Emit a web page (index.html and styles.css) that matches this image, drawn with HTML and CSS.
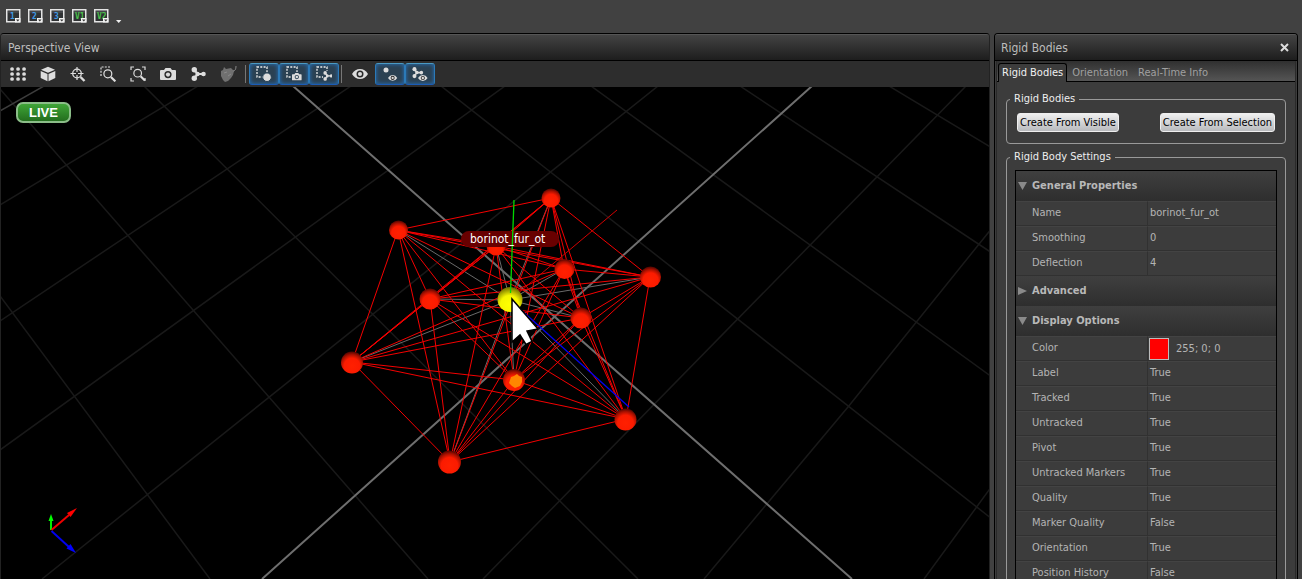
FILE: index.html
```html
<!DOCTYPE html>
<html lang="en">
<head>
<meta charset="utf-8">
<title>Perspective View</title>
<link rel="stylesheet" href="styles.css">
</head>
<body>
<div class="app">
  <header class="layouts">
    <button class="layout" aria-label="Layout 1"><svg width="15" height="14" viewBox="0 0 15 14"><use href="#frame"/><text x="4" y="10" class="digit">1</text><use href="#corner"/></svg></button>
    <button class="layout" aria-label="Layout 2"><svg width="15" height="14" viewBox="0 0 15 14"><use href="#frame"/><text x="4" y="10" class="digit">2</text><use href="#corner"/></svg></button>
    <button class="layout" aria-label="Layout 3"><svg width="15" height="14" viewBox="0 0 15 14"><use href="#frame"/><text x="4" y="10" class="digit">3</text><use href="#corner"/></svg></button>
    <button class="layout" aria-label="View 1"><svg width="15" height="14" viewBox="0 0 15 14"><use href="#frame"/><text x="3" y="10" class="digit view-digit">V1</text><use href="#corner"/></svg></button>
    <button class="layout" aria-label="View 2"><svg width="15" height="14" viewBox="0 0 15 14"><use href="#frame"/><text x="3" y="10" class="digit view-digit">V2</text><use href="#corner"/></svg></button>
    <button class="layout more" aria-label="More layouts"><svg width="6" height="14" viewBox="0 0 6 14"><path d="M0 11h5.400L2.700 14z" fill="#eee"/></svg></button>
  </header>

  <svg class="defs" width="0" height="0" aria-hidden="true">
    <defs>
      <g id="frame"><rect x=".75" y=".75" width="13" height="12" fill="#303234" stroke="#e4e4e4" stroke-width="1.500"/><path d="M2 3h11" stroke="#56595c"/></g>
      <g id="corner"><path d="M9 9h5.500v4.500H9z" fill="#f2f2f2"/><path d="M10 10.500h3.500l-1.700 2z" fill="#333"/></g>
      <g id="cam"><path fill-rule="evenodd" d="M1 3h3l1.500-2h5L12 3h3q1 0 1 1v8q0 1-1 1H1q-1 0-1-1V4q0-1 1-1zM8 4a3.600 3.600 0 1 0 0 7.200A3.600 3.600 0 1 0 8 4z"/><circle cx="8" cy="7.600" r="2.100"/></g>
      <g id="nodes"><path d="M3 3l4 4-4 4M7 7h6" fill="none" stroke="#ddd" stroke-width="2"/><circle cx="3.300" cy="2.700" r="2.700"/><circle cx="3.300" cy="11.300" r="2.700"/><circle cx="6.500" cy="7" r="2.200"/><circle cx="12.500" cy="7" r="2.300"/></g>
      <g id="eye"><path d="M0 5Q3 0 8 0t8 5q-3 5-8 5T0 5z"/><circle cx="8" cy="5" r="3.500" fill="#292929"/><circle cx="8" cy="5" r="2"/></g>
      <path id="marquee" d="M1 1h10v10H1z" fill="none" stroke="#eee" stroke-width="1.300" stroke-dasharray="2 1.300"/>
      <g id="lens"><circle cx="5.500" cy="5.500" r="4.500" fill="none" stroke="#ddd" stroke-width="1.400"/><path d="M9 9l5 5" stroke="#ddd" stroke-width="2.500"/></g>
      <radialGradient id="ball" cx="50%" cy="66%" r="65%"><stop offset="0" stop-color="#ff2000"/><stop offset=".55" stop-color="#fb1b00"/><stop offset=".8" stop-color="#a81000"/><stop offset="1" stop-color="#500500"/></radialGradient>
      <radialGradient id="sun" cx="48%" cy="70%" r="72%"><stop offset="0" stop-color="#ffff00"/><stop offset=".5" stop-color="#f6f600"/><stop offset="1" stop-color="#625f00"/></radialGradient>
    </defs>
  </svg>

  <main class="work">
    <section class="pane view">
      <h1 class="pane-title">Perspective View</h1>
      <div class="tools">
        <button class="tool" aria-label="Grid"><svg width="18" height="14" viewBox="0 0 18 14"><path d="M3 2h.1M9 2h.1M15 2h.1M3 7h.1M9 7h.1M15 7h.1M3 12h.1M9 12h.1M15 12h.1" stroke="#ddd" stroke-width="3.700" stroke-linecap="round"/></svg></button>
        <button class="tool" aria-label="View cube"><svg width="16" height="16" viewBox="0 0 16 16"><path d="M8 .8l7 3-7 3-7-3zM.7 5l6.800 2.900v7.300L.7 12zM15.300 5L8.500 7.900v7.300l6.800-3.200z"/></svg></button>
        <button class="tool" aria-label="Zoom to point"><svg width="16" height="16" viewBox="0 0 16 16"><circle cx="7" cy="7.500" r="4.300" fill="none" stroke="#ddd" stroke-width="1.300"/><path d="M7 1v5M7 9v5M.5 7.500H6M8 7.500h5.500" stroke="#ddd" stroke-width="1.200"/><path d="M10.500 11l4 4" stroke="#ddd" stroke-width="2.400"/></svg></button>
        <button class="tool" aria-label="Zoom to region"><svg width="16" height="16" viewBox="0 0 16 16"><path d="M1 10V1h9" fill="none" stroke="#ddd" stroke-width="1.200" stroke-dasharray="2 1.200"/><use href="#lens" transform="translate(3 3) scale(.88)"/></svg></button>
        <button class="tool" aria-label="Zoom to fit"><svg width="16" height="16" viewBox="0 0 16 16"><path d="M1 4V1h3M12 1h3v3M1 12v3h3M15 12v3" fill="none" stroke="#ddd" stroke-width="1.200"/><use href="#lens" transform="translate(3 2.500) scale(.85)"/></svg></button>
        <button class="tool" aria-label="Cameras"><svg width="16" height="14" viewBox="0 0 16 14"><use href="#cam"/></svg></button>
        <button class="tool" aria-label="Rigid bodies"><svg width="15" height="14" viewBox="0 0 15 14"><use href="#nodes"/></svg></button>
        <button class="tool" aria-label="Tracking" disabled><svg width="17" height="16" viewBox="0 0 17 16"><path d="M1 5l2-1 1-3 2 2 5-1 3 3-1 4-2 3-3 3-3 1-2-2-2-4z" fill="#707070"/><path d="M13 5q3 0 3-5M4 7l3-1M8 10l3-2" fill="none" stroke="#8a8a8a"/></svg></button>
        <span class="rule"></span>
        <button class="tool on" aria-label="Select markers" aria-pressed="true"><svg width="16" height="16" viewBox="0 0 16 16"><use href="#marquee"/><circle cx="11" cy="11.200" r="4.300" stroke="#254055"/></svg></button>
        <button class="tool on" aria-label="Select cameras" aria-pressed="true"><svg width="16" height="16" viewBox="0 0 16 16"><use href="#marquee"/><path d="M5 6h11v9H5z" fill="#2b4152"/><use href="#cam" transform="translate(6 6.500) scale(.6)"/></svg></button>
        <button class="tool on" aria-label="Select rigid bodies" aria-pressed="true"><svg width="16" height="16" viewBox="0 0 16 16"><use href="#marquee"/><path d="M7 5h5v10H7z" fill="#2b4152"/><use href="#nodes" transform="translate(7 5) scale(.65 .7)"/></svg></button>
        <span class="rule"></span>
        <button class="tool" aria-label="Visibility"><svg width="16" height="10" viewBox="0 0 16 10"><use href="#eye"/></svg></button>
        <button class="tool on" aria-label="Show markers" aria-pressed="true"><svg width="16" height="16" viewBox="0 0 16 16"><circle cx="4" cy="4" r="2.500"/><use href="#eye" transform="translate(6 9) scale(.58)"/></svg></button>
        <button class="tool on" aria-label="Show rigid bodies" aria-pressed="true"><svg width="16" height="16" viewBox="0 0 16 16"><use href="#nodes" transform="translate(0 1) scale(.75 .8)"/><use href="#eye" transform="translate(6 9) scale(.6)"/></svg></button>
      </div>
      <div class="stage">
        <svg class="scene" viewBox="1 87 988 492" preserveAspectRatio="xMidYMid slice">
          <g transform="translate(0 86)" fill="none" stroke-width="1.500">
            <path stroke="#191919" d="M0 210L210 493M0 3L428 493M144 0L638 493M441 0L992 433M591 0L992 291M740 0L992 167M889 0L992 62M198 0L0 119M351 0L0 235M505 0L0 364M658 0L42 493M966 0L483 493M992 142L848 321L704 493M992 400L924 493"/>
            <path stroke="#3d3d3d" d="M0 25L44 0"/>
            <path stroke="#6e6e6e" stroke-width="2" d="M293 0L852 493M812 0L262 493"/>
          </g>
          <path stroke="#6a6a6a" d="M510 300L551 198M510 300L398 230M510 300L496 246M510 300L564 269M510 300L650 277M510 300L430 299M510 300L581 318M510 300L352 362M510 300L514 380M510 300L626 419M510 300L450 462"/>
          <g fill="none" stroke="#f40000">
            <path d="M551 198L398 230L496 246L564 269L650 277L430 299L581 318L352 362L514 380L626 419L450 462Z"/>
            <path d="M551 198L496 246L650 277L581 318L514 380L450 462L398 230L564 269L430 299L352 362L626 419Z"/>
            <path d="M551 198L564 269L581 318L626 419L398 230L650 277L352 362L450 462L496 246L430 299L514 380Z"/>
            <path d="M551 198L650 277L514 380L398 230L430 299L626 419L496 246L581 318L450 462L564 269L352 362Z"/>
            <path d="M551 198L430 299L450 462L650 277L626 419L564 269L514 380L496 246L352 362L398 230L581 318Z"/>
            <path d="M510 300L617 210" stroke="#d00000"/>
          </g>
          <path d="M510 300L629 407" stroke="#0000f0" stroke-width="1.300"/>
          <g fill="url(#ball)">
            <circle cx="551" cy="198" r="9.500"/><circle cx="398.500" cy="230" r="9.500"/><circle cx="496" cy="246" r="9.500"/><circle cx="564.500" cy="269" r="10"/><circle cx="650.500" cy="277" r="10.500"/><circle cx="430" cy="299" r="10.500"/><circle cx="581" cy="318" r="10.500"/><circle cx="352" cy="362.500" r="11"/><circle cx="514" cy="380" r="11"/><circle cx="625.500" cy="419.500" r="11"/><circle cx="449.500" cy="462" r="11.500"/>
          </g>
          <path d="M511 377l3-1 3-2 2 2 3 1v5l-2 4-5 2-3-2-3-3 1-3z" fill="#ff8500"/>
          <circle cx="510" cy="299.500" r="12.500" fill="url(#sun)"/>
          <rect x="461" y="231" width="98" height="16" rx="8" fill="#680000"/>
          <path d="M514 200L510.500 293" stroke="#00d800" stroke-width="1.300"/>
          <text class="marker-name" x="470" y="243">borinot_fur_ot</text>
          <path d="M512 299V342L520 335L526 344.500L532 341.500L527 331L538 329Z" fill="#fff" stroke="#000" stroke-width="1.500"/>
          <path d="M51 530V519" stroke="#00f000" stroke-width="2"/><path d="M51 514l2.500 7h-5z" fill="#00ff00"/>
          <path d="M51.500 530L69 515" stroke="#f00000" stroke-width="2"/><path d="M77 508l-6.500 9-3.500-4z" fill="#ff0000"/>
          <path d="M51.500 531L69 547" stroke="#0000f0" stroke-width="2"/><path d="M76 553l-9.500-4.500 4-4.500z" fill="#0000ff"/>
        </svg>
        <button class="live">LIVE</button>
      </div>
    </section>

    <aside class="pane side">
      <div class="pane-title"><h2>Rigid Bodies</h2><button class="close" aria-label="Close"><svg width="9" height="9" viewBox="0 0 9 9"><path d="M1 1l7 7M8 1L1 8" stroke="#ddd" stroke-width="2"/></svg></button></div>
      <div class="side-body">
        <nav class="tabs" role="tablist">
          <button class="tab active" role="tab" aria-selected="true">Rigid Bodies</button>
          <button class="tab" role="tab">Orientation</button>
          <button class="tab" role="tab">Real-Time Info</button>
        </nav>
        <fieldset class="group">
          <legend>Rigid Bodies</legend>
          <div class="actions"><button class="action">Create From Visible</button><button class="action">Create From Selection</button></div>
        </fieldset>
        <fieldset class="group settings">
          <legend>Rigid Body Settings</legend>
          <table class="props">
            <colgroup><col class="names"><col></colgroup>
            <tbody>
              <tr class="section"><th colspan="2"><button aria-expanded="true"><span class="arrow down"></span>General Properties</button></th></tr>
              <tr><th scope="row">Name</th><td>borinot_fur_ot</td></tr>
              <tr><th scope="row">Smoothing</th><td>0</td></tr>
              <tr><th scope="row">Deflection</th><td>4</td></tr>
              <tr class="section"><th colspan="2"><button aria-expanded="false"><span class="arrow right"></span>Advanced</button></th></tr>
              <tr class="section"><th colspan="2"><button aria-expanded="true"><span class="arrow down"></span>Display Options</button></th></tr>
              <tr><th scope="row"><label for="color">Color</label></th><td class="color-cell"><div class="color"><input id="color" type="color" value="#ff0000">255; 0; 0</div></td></tr>
              <tr><th scope="row">Label</th><td>True</td></tr>
              <tr><th scope="row">Tracked</th><td>True</td></tr>
              <tr><th scope="row">Untracked</th><td>True</td></tr>
              <tr><th scope="row">Pivot</th><td>True</td></tr>
              <tr><th scope="row">Untracked Markers</th><td>True</td></tr>
              <tr><th scope="row">Quality</th><td>True</td></tr>
              <tr><th scope="row">Marker Quality</th><td>False</td></tr>
              <tr><th scope="row">Orientation</th><td>True</td></tr>
              <tr><th scope="row">Position History</th><td>False</td></tr>
            </tbody>
          </table>
        </fieldset>
      </div>
    </aside>
  </main>
</div>
</body>
</html>
```
FILE: styles.css
```css
* { box-sizing: border-box; }
body { margin: 0; background: #414141; font: 11px/14px "DejaVu Sans Condensed", "DejaVu Sans", sans-serif; color: #b4b4b4; }
button { font: inherit; color: inherit; border: 0; padding: 0; background: none; }
svg { display: block; fill: #ddd; }
.defs { position: absolute; }
.app { height: 100vh; display: flex; flex-direction: column; overflow: hidden; }

.layouts { display: flex; gap: 7px; height: 33px; flex: none; padding: 9px 6px 0; align-items: flex-start; }
.digit { font: bold 8px "DejaVu Sans Mono", monospace; fill: #3f9be8; }
.view-digit { fill: #4cc24c; }

.work { flex: 1; min-height: 0; display: flex; gap: 4px; padding-right: 4px; }
.pane { display: flex; flex-direction: column; min-height: 0; border: 1px solid #000; border-bottom: 0; border-radius: 4px 4px 0 0; overflow: hidden; background: #3c3c3c; }
.view { flex: 1; min-width: 0; border-color: #000 #222; }
.side { width: 304px; flex: none; }
.pane-title { margin: 0; height: 27px; flex: none; padding: 0 7px; display: flex; align-items: center; justify-content: space-between; font-size: 12px; font-weight: normal; color: #bdbdbd; background: linear-gradient(#434343, #1d1d1d); border-top: 1px solid #555; border-bottom: 1px solid #000; }
.side .pane-title { padding: 0 8px 0 6px; }
.pane-title h2 { margin: 0; font: inherit; }

.tools { height: 26px; flex: none; display: flex; align-items: center; padding: 0 2px; background: #2d2d2d; }
.tool { width: 30px; height: 22px; display: flex; align-items: center; justify-content: center; }
.tool.on { border: 1px solid #2b7ab8; border-top-color: #4a9ac4; border-bottom-color: #1a5cb8; border-radius: 3px; background: #2b4152; box-shadow: inset 0 0 4px #2673c0; }
.rule { width: 1px; height: 18px; margin: 0 3px 0 2px; background: #777; }

.stage { flex: 1; min-height: 0; position: relative; background: #000; }
.scene { width: 100%; height: 100%; }
.marker-name { font: 12px "DejaVu Sans Condensed", sans-serif; fill: #fff; }
.live { position: absolute; left: 15px; top: 15px; width: 55px; height: 21px; border: 2px solid #8bbd88; border-radius: 7px; background: linear-gradient(#3fa537, #236e1e); color: #fff; font: bold 13px/16px "Liberation Sans", sans-serif; }

.side-body { flex: 1; min-height: 0; margin: 0 1px; border: solid #2a2a2a; border-width: 0 1px; }
.tabs { display: flex; height: 21px; padding: 2px 1px 0; background: linear-gradient(#303030, #555); border-bottom: 1px solid #000; }
.tab { padding: 0 5px; height: 19px; color: #a0a0a0; }
.tab.active { padding: 0 3px; border: 1px solid #000; border-bottom: 0; border-radius: 3px 3px 0 0; background: #3c3c3c; color: #f0f0f0; }
.group { min-width: 0; margin: 10px 9px 0; padding: 7px 10px 11px; border: 1px solid #999; border-radius: 4px; }
.group legend { margin-left: -7px; padding: 0 4px; color: #eee; }
.actions { display: flex; justify-content: space-between; }
.action { height: 19px; padding: 0 2px; border: 1px solid #eee; border-radius: 3px; background: linear-gradient(#efefef, #b8babd); color: #000; }
.group.settings { margin-top: 6px; padding: 6px 8px 11px; }
.group.settings legend { margin-left: -5px; }

.props { width: 100%; table-layout: fixed; border-collapse: separate; border-spacing: 0; border: 1px solid #000; }
.names { width: 132px; }
.props tr { height: 25px; }
.props th, .props td { height: 25px; padding: 0 2px 2px; text-align: left; font-weight: normal; border-bottom: 1px solid #313131; border-top: 1px solid #434343; }
.props th { padding-left: 16px; border-right: 1px solid #313131; }
.props .section th { height: 30px; padding: 0; border: 0; background: linear-gradient(#3f3f3f, #2e2e2e); }
.props .section button { width: 100%; display: flex; align-items: center; font-weight: bold; color: #b8b8b8; }
.arrow { width: 9px; height: 8px; margin: 0 5px 0 2px; background: #8a8a8a; }
.arrow.down { clip-path: polygon(0 0, 100% 0, 50% 100%); }
.arrow.right { clip-path: polygon(0 0, 100% 50%, 0 100%); }
.props .color-cell { padding: 0 1px; }
.color { display: flex; align-items: center; gap: 7px; }
.color input { width: 20px; height: 22px; padding: 0; border: 1px solid #bbb; background: #f00; appearance: none; }
.color input::-webkit-color-swatch-wrapper { padding: 0; }
.color input::-webkit-color-swatch { border: 0; border-radius: 0; }
```
